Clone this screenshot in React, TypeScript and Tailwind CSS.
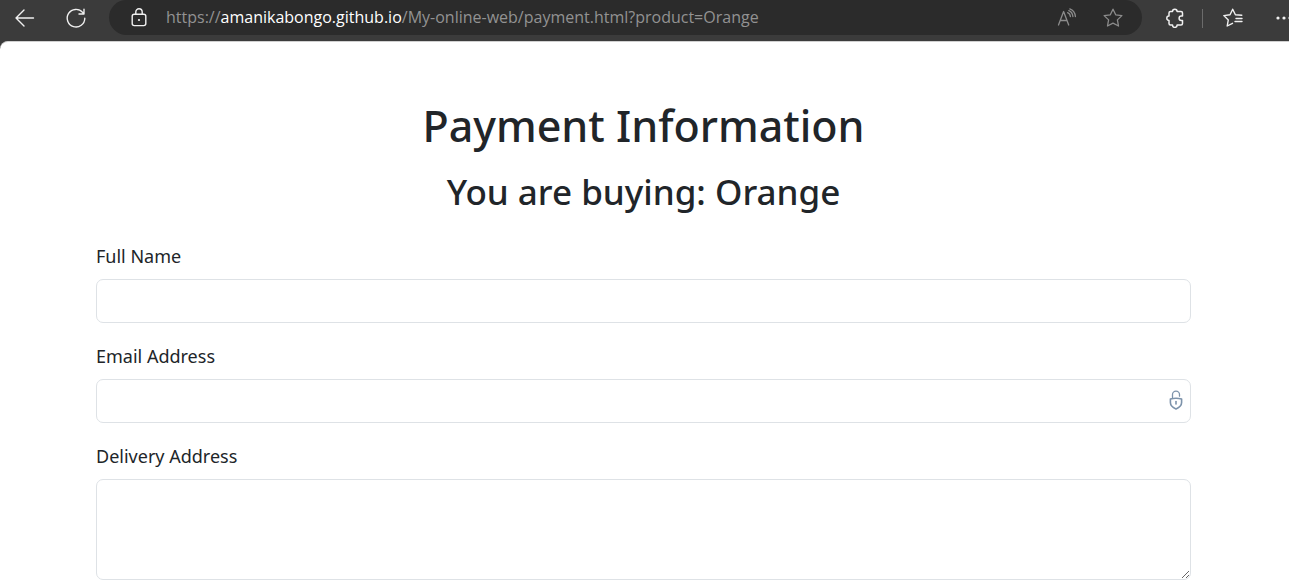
import type { ReactNode } from 'react';

function IconButton({ label, className, children }: { label: string; className?: string; children: ReactNode }) {
  return (
    <button type="button" aria-label={label} className={`flex shrink-0 items-center justify-center ${className ?? ''}`}>
      {children}
    </button>
  );
}

const stroke = {
  fill: 'none',
  stroke: 'currentColor',
  strokeLinecap: 'round' as const,
  strokeLinejoin: 'round' as const,
};

function BrowserBar() {
  return (
    <header className="flex h-[41px] items-start overflow-hidden bg-[#3b3b3b] text-[#f0f0f0]">
      <IconButton label="Back" className="ml-[14px] h-[35px] w-[22px]">
        <svg width="22" height="20" viewBox="0 0 22 20" strokeWidth="1.4" {...stroke}>
          <path d="M19.5 10H2M10 2L2 10l8 8" />
        </svg>
      </IconButton>
      <IconButton label="Refresh" className="ml-[29px] h-[35px] w-[22px]">
        <svg width="22" height="22" viewBox="0 0 22 22" strokeWidth="1.4" {...stroke}>
          <path d="M19.8 11.3A8.8 8.8 0 1 1 17.6 5.4L19 7M19 2.2V7h-5" />
        </svg>
      </IconButton>
      <div className="ml-[22px] flex h-[35px] min-w-0 flex-1 items-center rounded-r-full rounded-l-full bg-[#2b2b2b] pr-[19px] pl-[21px]">
        <IconButton label="View site information" className="w-[18px]">
          <svg width="18" height="20" viewBox="0 0 18 20" strokeWidth="1.4" {...stroke}>
            <rect x="2.2" y="6.2" width="13.6" height="11.4" rx="2" />
            <path d="M5.8 6V3.9a3.2 3.2 0 0 1 6.4 0V6" />
            <circle cx="9" cy="12" r="1.1" fill="currentColor" stroke="none" />
          </svg>
        </IconButton>
        <div className="ml-[18px] min-w-0 flex-1 truncate pb-[2px] font-['Open_Sans','Noto_Sans',sans-serif] text-[16px] leading-5 text-[#929292]">
          https://<span className="text-white">amanikabongo.github.io</span>/My-online-web/payment.html?product=Orange
        </div>
        <IconButton label="Read aloud" className="text-[#8c8c8c]">
          <svg width="20" height="20" viewBox="0 0 20 20" strokeWidth="1.3" {...stroke}>
            <path d="M1.5 17L6.6 3.5 11.700 17M3.300 12.500h6.600M10.600 4.600c1.700.6 2.600 1.900 2.800 3.900M11.800 2.600c2.400.9 3.800 2.900 4.100 5.900M12.800.9c3.300 1.200 5.200 3.700 5.600 7.600" />
          </svg>
        </IconButton>
        <IconButton label="Add to favorites" className="ml-[26px] text-[#8c8c8c]">
          <svg width="20" height="20" viewBox="0 0 20 20" strokeWidth="1.3" {...stroke}>
            <path d="M10 1.2l2.7 5.6 6.2.8-4.5 4.3 1.1 6.1L10 15.1 4.5 18l1.1-6.1L1.1 7.6l6.2-.8z" />
          </svg>
        </IconButton>
      </div>
      <IconButton label="Extensions" className="ml-[23px] h-[35px]">
        <svg width="20" height="20" viewBox="0 0 20 20" strokeWidth="1.5" {...stroke}>
          <path d="M7.5 3.5a2.3 2.3 0 0 1 4.6 0H16A1.5 1.5 0 0 1 17.5 5V8h-1.200a2.200 2.200 0 0 0 0 4.400h1.200v3.200a1.500 1.500 0 0 1-1.500 1.500h-3.900a2.300 2.300 0 0 1-4.600 0H5.500A1.500 1.500 0 0 1 4 15.600v-3.200a2.200 2.200 0 0 1 0-4.400V5a1.500 1.500 0 0 1 1.500-1.500z" />
        </svg>
      </IconButton>
      <div className="mt-[9px] ml-[17px] h-[19px] w-px bg-[#6b6b6b]" />
      <IconButton label="Favorites" className="ml-[20px] h-[35px]">
        <svg width="20" height="20" viewBox="0 0 20 20" strokeWidth="1.4" {...stroke}>
          <path d="M18.800 7.200l-6.400-.4L9.700 1.200 7 6.800l-6.200.8 4.500 4.300L4.200 18l5.300-2.700M13 10.500h6M12 13.500h7" />
        </svg>
      </IconButton>
      <IconButton label="Settings and more" className="-mr-[6px] ml-[32px] h-[35px]">
        <svg width="20" height="20" viewBox="0 0 20 20" fill="currentColor">
          <circle cx="3" cy="10" r="1.6" />
          <circle cx="9" cy="10" r="1.6" />
          <circle cx="15" cy="10" r="1.6" />
        </svg>
      </IconButton>
    </header>
  );
}

const control = 'block w-full rounded-[7px] border border-[#dee2e6] bg-white px-3 outline-none focus:border-[#86b7fe]';
const labelStyle = 'mb-[10px] block w-fit leading-[26px]';

export default function App() {
  return (
    <div className="bg-[#3b3b3b] font-['Noto_Sans','Open_Sans',sans-serif] text-[#212529]">
      <BrowserBar />
      <main className="rounded-tl-lg border-t border-[#d0d0d0] bg-white pt-[57px] pr-[98px] pl-24 text-[18px]">
        <h1 className="mb-[17px] text-center text-[43px] leading-[54px] font-medium">Payment Information</h1>
        <h2 className="mb-[30px] text-center text-[35px] leading-[43px] font-medium">You are buying: Orange</h2>
        <form className="flex flex-col gap-5">
          <div>
            <label htmlFor="name" className={labelStyle}>Full Name</label>
            <input id="name" type="text" className={`${control} h-[44px]`} />
          </div>
          <div>
            <label htmlFor="email" className={labelStyle}>Email Address</label>
            <div className="relative">
              <input id="email" type="email" className={`${control} h-[44px]`} />
              <svg className="absolute top-[11px] right-[8px] text-[#7d93ab]" width="14" height="20" viewBox="0 0 14 20" strokeWidth="1.6" {...stroke}>
                <path d="M3.500 7.500V4.600a3.500 3.500 0 0 1 7 0v1.600" strokeWidth="1.3" />
                <path d="M1.400 9Q7 7.400 12.600 9V12.500c0 3.200-2.600 5.200-5.600 6.500-3-1.300-5.600-3.300-5.600-6.500z" />
                <path d="M7 11.500v2.400" />
              </svg>
            </div>
          </div>
          <div>
            <label htmlFor="address" className={labelStyle}>Delivery Address</label>
            <textarea id="address" className={`${control} h-[101px] resize-y`} />
          </div>
        </form>
      </main>
    </div>
  );
}
